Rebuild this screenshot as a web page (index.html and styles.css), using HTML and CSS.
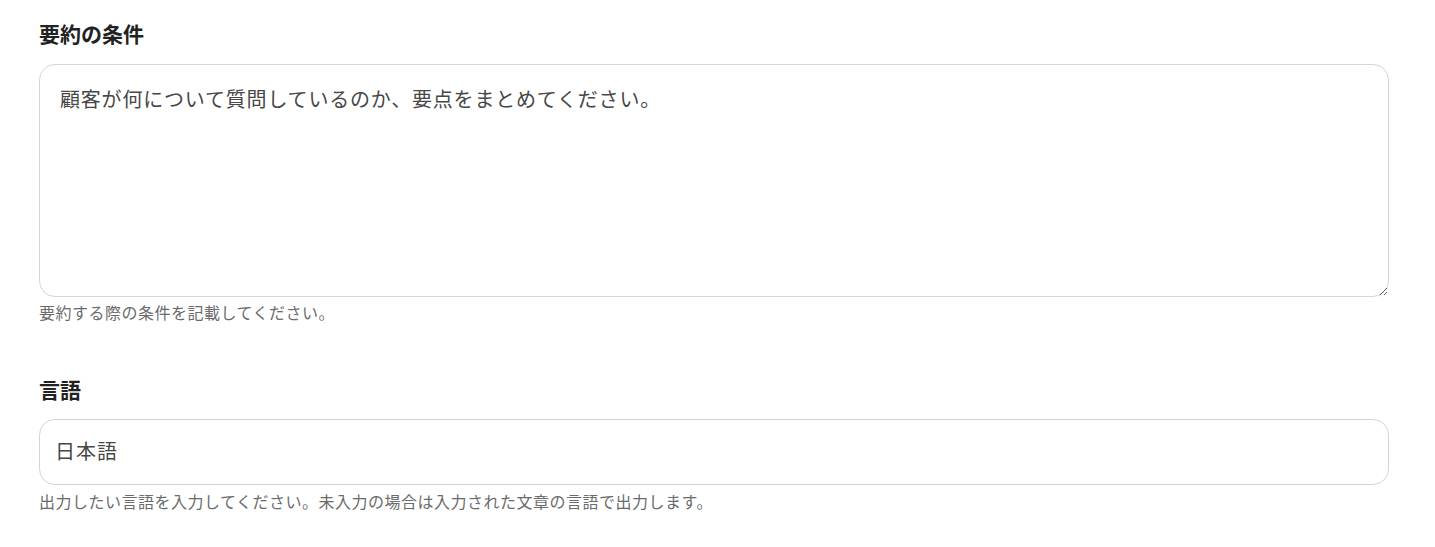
FILE: index.html
```html
<!DOCTYPE html>
<html lang="ja">
<head>
<meta charset="utf-8">
<link rel="stylesheet" href="styles.css">
</head>
<body>
<main class="form">
  <section class="field">
    <h2 class="label">要約の条件</h2>
    <textarea class="textarea">顧客が何について質問しているのか、要点をまとめてください。</textarea>
    <p class="hint">要約する際の条件を記載してください。</p>
  </section>
  <section class="field field-lang">
    <h2 class="label">言語</h2>
    <input class="input" type="text" value="日本語">
    <p class="hint hint-last">出力したい言語を入力してください。未入力の場合は入力された文章の言語で出力します。</p>
  </section>
</main>
</body>
</html>
```
FILE: styles.css
```css
* { box-sizing: border-box; }
html, body { margin: 0; padding: 0; background: #fff; }
body {
  font-family: "Noto Sans CJK JP", "Noto Sans", sans-serif;
  color: #222;
}
.form {
  display: flex;
  flex-direction: column;
  padding: 19px 46px 0 39px;
  width: 1435px;
}
.field { display: flex; flex-direction: column; }
.field-lang { margin-top: 51px; }
.label {
  margin: 0;
  font-size: 21px;
  font-weight: 700;
  line-height: 28px;
  color: #222;
}
.textarea {
  display: block;
  margin-top: 17px;
  width: 1350px;
  height: 233px;
  border: 1px solid #d3d5da;
  border-radius: 16px;
  padding: 18px 20px;
  font-family: inherit;
  font-size: 20px;
  letter-spacing: 0.8px;
  line-height: 32px;
  color: #474747;
  resize: vertical;
  outline: none;
  background: #fff;
}
.input {
  display: block;
  margin-top: 16px;
  width: 1350px;
  height: 66px;
  border: 1px solid #d3d5da;
  border-radius: 16px;
  padding: 0 15px 3px;
  font-family: inherit;
  font-size: 20px;
  letter-spacing: 1px;
  color: #474747;
  outline: none;
  background: #fff;
}
.hint {
  margin: 3px 0 0;
  font-size: 16px;
  letter-spacing: 0.5px;
  line-height: 24px;
  color: #6b6b6b;
}
.hint-last { margin-top: 4px; }
```
